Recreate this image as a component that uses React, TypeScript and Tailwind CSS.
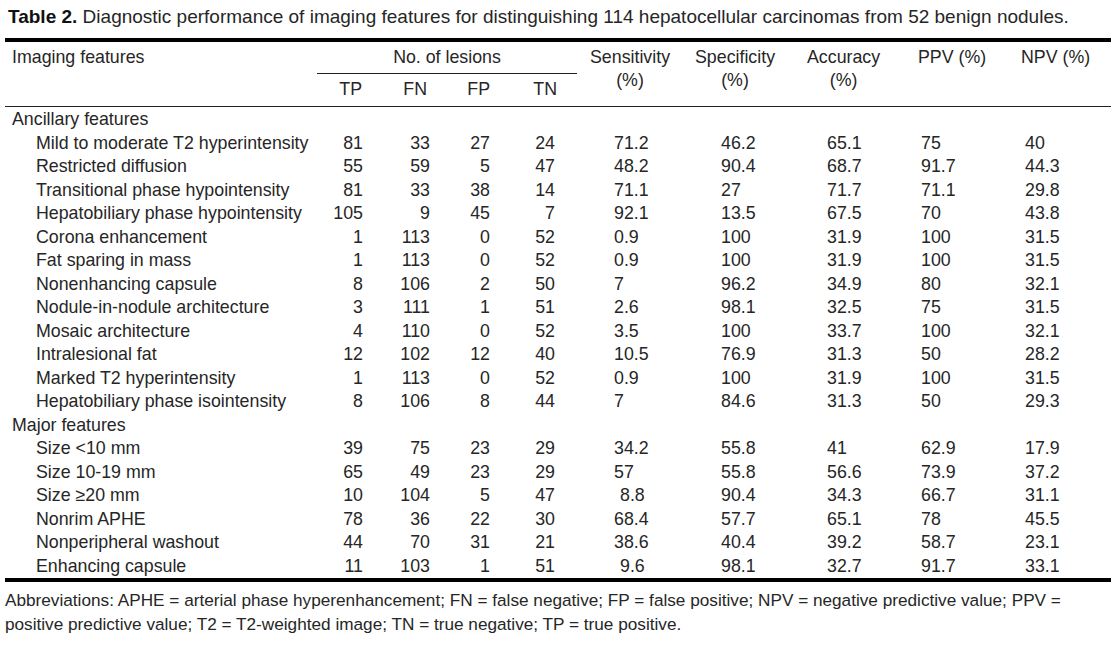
import React from "react";

type Row = { label: string; group?: boolean; v?: string[] };

const rows: Row[] = [
  { label: "Ancillary features", group: true },
  { label: "Mild to moderate T2 hyperintensity", v: ["81", "33", "27", "24", "71.2", "46.2", "65.1", "75", "40"] },
  { label: "Restricted diffusion", v: ["55", "59", "5", "47", "48.2", "90.4", "68.7", "91.7", "44.3"] },
  { label: "Transitional phase hypointensity", v: ["81", "33", "38", "14", "71.1", "27", "71.7", "71.1", "29.8"] },
  { label: "Hepatobiliary phase hypointensity", v: ["105", "9", "45", "7", "92.1", "13.5", "67.5", "70", "43.8"] },
  { label: "Corona enhancement", v: ["1", "113", "0", "52", "0.9", "100", "31.9", "100", "31.5"] },
  { label: "Fat sparing in mass", v: ["1", "113", "0", "52", "0.9", "100", "31.9", "100", "31.5"] },
  { label: "Nonenhancing capsule", v: ["8", "106", "2", "50", "7", "96.2", "34.9", "80", "32.1"] },
  { label: "Nodule-in-nodule architecture", v: ["3", "111", "1", "51", "2.6", "98.1", "32.5", "75", "31.5"] },
  { label: "Mosaic architecture", v: ["4", "110", "0", "52", "3.5", "100", "33.7", "100", "32.1"] },
  { label: "Intralesional fat", v: ["12", "102", "12", "40", "10.5", "76.9", "31.3", "50", "28.2"] },
  { label: "Marked T2 hyperintensity", v: ["1", "113", "0", "52", "0.9", "100", "31.9", "100", "31.5"] },
  { label: "Hepatobiliary phase isointensity", v: ["8", "106", "8", "44", "7", "84.6", "31.3", "50", "29.3"] },
  { label: "Major features", group: true },
  { label: "Size <10 mm", v: ["39", "75", "23", "29", "34.2", "55.8", "41", "62.9", "17.9"] },
  { label: "Size 10-19 mm", v: ["65", "49", "23", "29", "57", "55.8", "56.6", "73.9", "37.2"] },
  { label: "Size \u226520 mm", v: ["10", "104", "5", "47", "8.8", "90.4", "34.3", "66.7", "31.1"] },
  { label: "Nonrim APHE", v: ["78", "36", "22", "30", "68.4", "57.7", "65.1", "78", "45.5"] },
  { label: "Nonperipheral washout", v: ["44", "70", "31", "21", "38.6", "40.4", "39.2", "58.7", "23.1"] },
  { label: "Enhancing capsule", v: ["11", "103", "1", "51", "9.6", "98.1", "32.7", "91.7", "33.1"] },
];

function BodyRow({ r }: { r: Row }) {
  if (r.group || !r.v) {
    return (
      <div className="flex h-[23.5px] items-center leading-[23.5px]">
        <div className="pl-[7px]">{r.label}</div>
      </div>
    );
  }
  const v = r.v;
  const sensShift = v[4] === "8.8" || v[4] === "9.6";
  return (
    <div className="flex h-[23.5px] items-center leading-[23.5px] whitespace-nowrap">
      <div className="w-[313px] pl-[31px]">{r.label}</div>
      <div className="w-[45px] text-right">{v[0]}</div>
      <div className="w-[67px] text-right">{v[1]}</div>
      <div className="w-[60px] text-right">{v[2]}</div>
      <div className="w-[65px] text-right">{v[3]}</div>
      <div className={sensShift ? "w-[140px] pl-[65px]" : "w-[140px] pl-[59px]"}>{v[4]}</div>
      <div className="w-[112px] pl-[26px]">{v[5]}</div>
      <div className="w-[111px] pl-[20px]">{v[6]}</div>
      <div className="w-[103px] pl-[3px]">{v[7]}</div>
      <div className="flex-1 pl-[4px]">{v[8]}</div>
    </div>
  );
}

export default function App() {
  return (
    <div
      className="w-[1119px] h-[649px] bg-white text-[#262626] text-[17.8px] overflow-hidden"
      style={{ fontFamily: '"Liberation Sans", Arial, sans-serif' }}
    >
      <div className="h-[38px] pt-[5px] pl-[8px] leading-[24px] whitespace-nowrap text-[19px]">
        <span className="font-bold text-[#111]">Table 2.</span> Diagnostic performance of imaging features for
        distinguishing 114 hepatocellular carcinomas from 52 benign nodules.
      </div>
      <div className="ml-[5px] w-[1106px]">
        <div className="border-t-4 border-black" />
        <div className="flex h-[65px] border-b border-[#222] leading-[23px] whitespace-nowrap">
          <div className="w-[312px] pl-[7px] pt-[3.5px]">Imaging features</div>
          <div className="w-[260px] flex flex-col">
            <div className="h-[32px] pt-[3.5px] text-center border-b border-[#222]">No. of lesions</div>
            <div className="h-[32px] pt-[3.5px] flex">
              <div className="w-[45px] text-right">TP</div>
              <div className="w-[65px] text-right">FN</div>
              <div className="w-[63px] text-right">FP</div>
              <div className="w-[67px] text-right">TN</div>
            </div>
          </div>
          <div className="w-[118px] pl-[13px] pt-[3.5px]">
            <div className="inline-flex flex-col items-center">
              <span>Sensitivity</span>
              <span>(%)</span>
            </div>
          </div>
          <div className="w-[112px] pt-[3.5px]">
            <div className="inline-flex flex-col items-center">
              <span>Specificity</span>
              <span>(%)</span>
            </div>
          </div>
          <div className="w-[111px] pt-[3.5px]">
            <div className="inline-flex flex-col items-center">
              <span>Accuracy</span>
              <span>(%)</span>
            </div>
          </div>
          <div className="w-[103px] pt-[3.5px]">PPV (%)</div>
          <div className="flex-1 pt-[3.5px]">NPV (%)</div>
        </div>
        <div className="flex flex-col pt-px">
          {rows.map((r, i) => (
            <BodyRow key={i} r={r} />
          ))}
        </div>
        <div className="border-t-4 border-black" />
      </div>
      <div className="pl-[5px] pt-[6px] leading-[24px] whitespace-nowrap text-[17.2px]">
        Abbreviations: APHE = arterial phase hyperenhancement; FN = false negative; FP = false positive; NPV =
        negative predictive value; PPV =
        <br />
        positive predictive value; T2 = T2-weighted image; TN = true negative; TP = true positive.
      </div>
    </div>
  );
}
